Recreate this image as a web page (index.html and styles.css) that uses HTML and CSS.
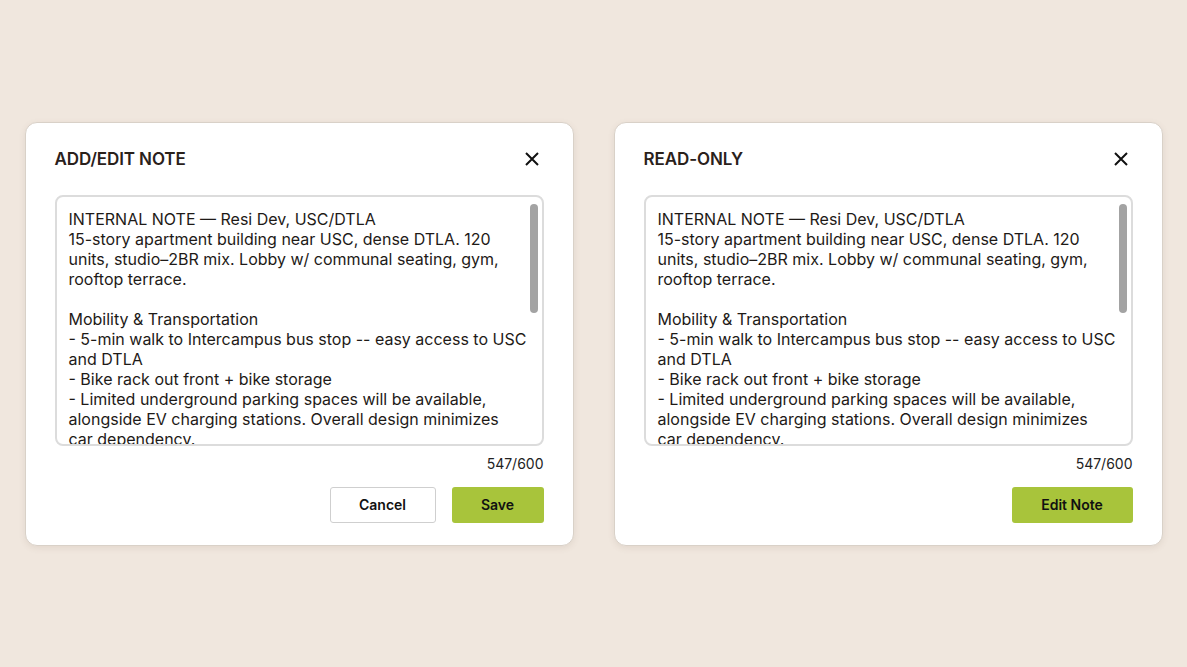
FILE: index.html
```html
<!DOCTYPE html>
<html lang="en">

<head>
    <meta charset="UTF-8">
    <meta name="viewport" content="width=device-width, initial-scale=1.0">
    <title>Notes</title>
    <link rel="stylesheet" href="styles.css">
</head>

<body>
    <div class="container">
        <div class="card">
            <div class="card-head">
                <h2 class="title">ADD/EDIT NOTE</h2>
                <button class="close" aria-label="Close">
                    <svg width="16" height="16" viewBox="0 0 16 16"><path d="M2 2L14 14M14 2L2 14" stroke="#111" stroke-width="2" fill="none"/></svg>
                </button>
            </div>
            <div class="note-box">
                <div class="note-text">INTERNAL NOTE — Resi Dev, USC/DTLA
15-story apartment building near USC, dense DTLA. 120
units, studio–2BR mix. Lobby w/ communal seating, gym,
rooftop terrace.

Mobility &amp; Transportation
- 5-min walk to Intercampus bus stop -- easy access to USC
and DTLA
- Bike rack out front + bike storage
- Limited underground parking spaces will be available,
alongside EV charging stations. Overall design minimizes
car dependency.</div>
                <div class="thumb"></div>
            </div>
            <div class="counter">547/600</div>
            <div class="actions">
                <button class="btn btn-outline">Cancel</button>
                <button class="btn btn-primary save">Save</button>
            </div>
        </div>

        <div class="card">
            <div class="card-head">
                <h2 class="title">READ-ONLY</h2>
                <button class="close" aria-label="Close">
                    <svg width="16" height="16" viewBox="0 0 16 16"><path d="M2 2L14 14M14 2L2 14" stroke="#111" stroke-width="2" fill="none"/></svg>
                </button>
            </div>
            <div class="note-box">
                <div class="note-text">INTERNAL NOTE — Resi Dev, USC/DTLA
15-story apartment building near USC, dense DTLA. 120
units, studio–2BR mix. Lobby w/ communal seating, gym,
rooftop terrace.

Mobility &amp; Transportation
- 5-min walk to Intercampus bus stop -- easy access to USC
and DTLA
- Bike rack out front + bike storage
- Limited underground parking spaces will be available,
alongside EV charging stations. Overall design minimizes
car dependency.</div>
                <div class="thumb"></div>
            </div>
            <div class="counter">547/600</div>
            <div class="actions">
                <button class="btn btn-primary edit">Edit Note</button>
            </div>
        </div>
    </div>
</body>

</html>
```

FILE: styles.css
```css
* {
    margin: 0;
    padding: 0;
    box-sizing: border-box;
}

body {
    display: flex;
    align-items: center;
    justify-content: center;
    min-height: 100vh;
    background-color: #f0e7de;
    font-family: Inter, "Liberation Sans", sans-serif;
    color: #1e1a17;
}

.container {
    display: flex;
    gap: 40px;
}

.card {
    width: 549px;
    height: 424px;
    background-color: #fff;
    border: 1px solid #d9d1c8;
    border-radius: 12px;
    box-shadow: 0 2px 6px rgba(120, 100, 80, 0.12);
    padding: 26px 29px 0 29px;
    display: flex;
    flex-direction: column;
}

.card-head {
    display: flex;
    align-items: center;
    justify-content: space-between;
    height: 20px;
}

.title {
    font-size: 17px;
    font-weight: 600;
    color: #2a211b;
    letter-spacing: -0.1px;
}

.close {
    border: none;
    background: none;
    width: 16px;
    height: 16px;
    margin-right: 4px;
    display: flex;
}

.note-box {
    position: relative;
    margin-top: 26px;
    height: 251px;
    border: 2px solid #dcdcdc;
    border-radius: 8px;
    padding: 12px 12px 0 12px;
    overflow: hidden;
}

.note-text {
    white-space: pre;
    font-size: 16px;
    line-height: 20px;
    color: #1e1a17;
}

.thumb {
    position: absolute;
    top: 7px;
    right: 4px;
    width: 8px;
    height: 109px;
    border-radius: 4px;
    background-color: #a3a3a3;
}

.counter {
    margin-top: 9px;
    text-align: right;
    font-size: 14px;
    color: #222;
}

.actions {
    display: flex;
    justify-content: flex-end;
    gap: 16px;
    margin-top: 15px;
}

.btn {
    height: 36px;
    border-radius: 3px;
    font-family: Inter, "Liberation Sans", sans-serif;
    font-size: 14px;
    font-weight: 600;
    color: #111;
}

.btn-outline {
    width: 106px;
    background-color: #fff;
    border: 1px solid #cfcfcf;
}

.btn-primary {
    background-color: #a8c43b;
    border: none;
}

.save {
    width: 92px;
}

.edit {
    width: 121px;
}
```
